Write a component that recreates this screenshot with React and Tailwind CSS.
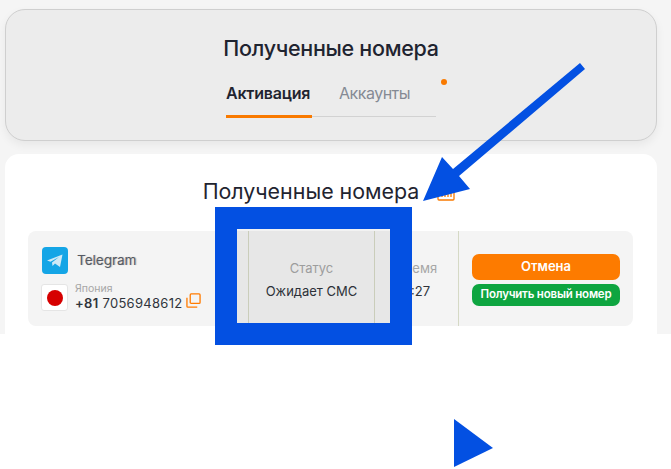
import React from 'react';

const font = { fontFamily: 'Inter, "Noto Sans", sans-serif' };

const CopyIcon = () => (
  <svg width="15" height="15" viewBox="0 0 16 16" fill="none" stroke="#ff7b00" strokeWidth="1.4" className="mb-[3px]">
    <rect x="4.5" y="1" width="10.5" height="10" rx="1" />
    <path d="M1 5v9a1 1 0 0 0 1 1h10" />
  </svg>
);

const TelegramIcon = () => (
  <div className="w-[26px] h-[27px] rounded-[4px] bg-[#14a5e6] flex items-center justify-center">
    <svg width="18" height="16" viewBox="0 0 18 16">
      <path d="M1 7.5 16.5 1.5 14 14 9 10.5 6.5 13 6 9.5 13 4 4.5 8.8z" fill="#cfe9f6" />
    </svg>
  </div>
);

const App = () => {
  return (
    <div className="relative w-[671px] h-[469px] overflow-hidden bg-[#f5f5f5]" style={font}>
      <div className="pl-[5px] pr-[14px] pt-[9px]">
        {/* Шапка */}
        <div className="h-[132px] rounded-[20px] border border-[#cfcfcf] bg-[#ececec] shadow-[0_4px_10px_rgba(0,0,0,0.06)] flex flex-col items-center pt-[24px]">
          <h1 className="text-[21.5px] leading-[28px] font-medium text-[#1f2430] tracking-[-0.3px]">Полученные номера</h1>
          <div className="relative mt-[15px] w-[210px] border-b border-[#d2d2d2] h-[40px] flex gap-[27px] text-[16px]">
            <div className="w-[86px] h-[41px] border-b-[3px] border-[#f97a00] font-semibold text-[#1f2430] leading-[32px] tracking-[-0.2px]">Активация</div>
            <div className="text-[#858a94] leading-[32px] tracking-[-0.5px]">Аккаунты</div>
            <span className="absolute left-[215px] top-[2px] w-[6px] h-[6px] rounded-full bg-[#f97a00]" />
          </div>
        </div>

        {/* Список номеров */}
        <div className="mt-[13px] h-[300px] bg-white rounded-[14px] pl-[23px] pr-[24px] pt-[22px]">
          <div className="flex justify-center items-center gap-[18px] h-[30px] pr-[3px]">
            <h2 className="text-[21.4px] text-[#1f2430]">Полученные номера</h2>
            <svg width="18" height="18" viewBox="0 0 18 18" fill="none" stroke="#f97a00" strokeWidth="1.3" className="mt-[4px]">
              <rect x="1" y="3" width="16" height="13" rx="1" />
              <path d="M5 13v-3M8 13V8M11 13V6M14 13V9" />
            </svg>
          </div>

          <div className="mt-[25px] h-[95px] bg-[#f4f4f4] rounded-[8px] flex">
            <div className="w-[220px] pl-[13px] pt-[16px]">
              <div className="flex items-center gap-[9px] pl-[1px]">
                <TelegramIcon />
                <span className="text-[13.5px] text-[#555a63] [text-shadow:1px_0_1px_#b5b5b5]">Telegram</span>
              </div>
              <div className="flex items-center gap-[7px] mt-[10px]">
                <div className="w-[27px] h-[27px] rounded-[3px] border border-[#e5e5e5] bg-white flex items-center justify-center">
                  <span className="w-[16px] h-[16px] rounded-full bg-[#d60000]" />
                </div>
                <div className="-mt-[2px]">
                  <div className="text-[10.5px] leading-[12px] text-[#a6a6a6]">Япония</div>
                  <div className="flex items-end gap-[3px] h-[16px]">
                    <span className="text-[13px] leading-[16px] text-[#30343c] tracking-[0.3px]">
                      <span className="font-semibold">+81</span> 7056948612
                    </span>
                    <CopyIcon />
                  </div>
                </div>
              </div>
            </div>
            <div className="w-[127px] border-x border-[#d5d9c5] flex flex-col items-center justify-center gap-[4px] pt-[3px]">
              <span className="text-[13px] text-[#a6a6a6]">Статус</span>
              <span className="text-[13px] text-[#30343c]">Ожидает СМС</span>
            </div>
            <div className="w-[84px] border-r border-[#d5d9c5] flex flex-col items-center justify-center gap-[4px] pt-[3px]">
              <span className="text-[13px] text-[#a6a6a6]">Время</span>
              <span className="text-[13px] text-[#30343c]">9:27</span>
            </div>
            <div className="flex-1 px-[13px] flex flex-col justify-center gap-[4px] pt-[2px]">
              <button className="h-[26px] rounded-[7px] bg-[#fd7b00] text-white text-[13px] font-semibold">Отмена</button>
              <button className="h-[22px] rounded-[7px] bg-[#0ea540] text-white text-[11.5px] font-semibold tracking-[-0.2px] whitespace-nowrap">Получить новый номер</button>
            </div>
          </div>
        </div>
      </div>

      {/* Белая полоса снизу */}
      <div className="absolute left-0 right-0 bottom-0 h-[135px] bg-white" />

      {/* Аннотации поверх скриншота */}
      <div className="absolute left-[215px] top-[207px] w-[197px] h-[138px] border-[22px] border-[#0350e2] bg-black/5" />
      <svg className="absolute left-0 top-0 pointer-events-none" width="671" height="469">
        <path d="M580 63 L585 69 L459 176 L470 189 L423 201 L442 157 L453 169 Z" fill="#0350e2" />
        <polygon points="454,419 493,448 454,467" fill="#0350e2" />
      </svg>
    </div>
  );
};

export default App;
